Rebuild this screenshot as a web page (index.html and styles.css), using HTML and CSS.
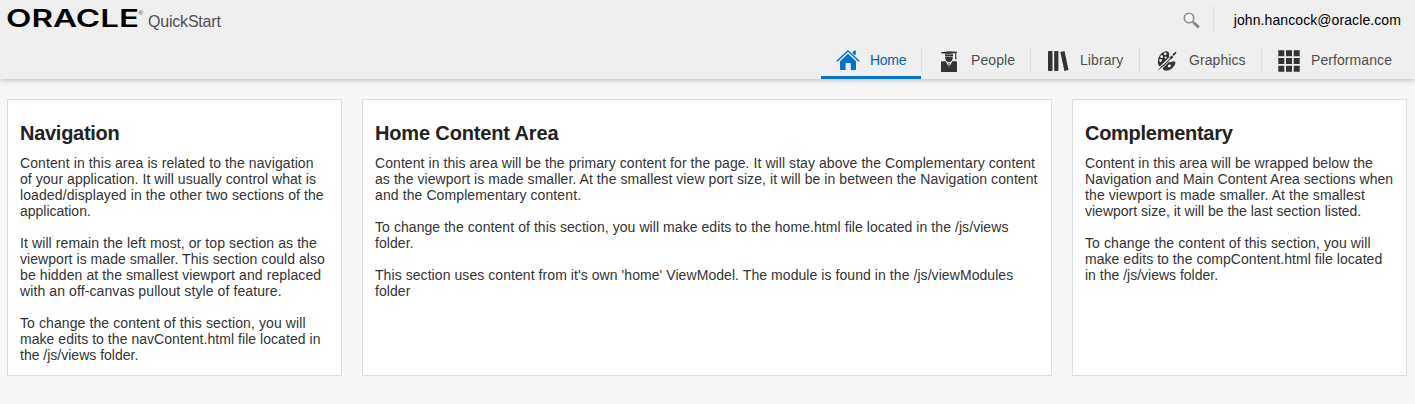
FILE: index.html
```html
<!DOCTYPE html>
<html lang="en">
<head>
<meta charset="utf-8">
<title>Oracle QuickStart</title>
<link rel="stylesheet" href="styles.css">
</head>
<body>
<header class="header">
  <div class="topbar">
    <div class="brand">
      <svg class="logo" width="137" height="20" viewBox="0 0 137 20" role="img" aria-label="Oracle">
        <text class="logo-word" x="-1" y="18" textLength="133" lengthAdjust="spacingAndGlyphs">ORACLE</text>
        <text class="logo-mark" x="131.5" y="5.5">®</text>
      </svg>
      <span class="product">QuickStart</span>
    </div>
    <div class="account">
      <svg class="search" width="18" height="18" viewBox="0 0 18 18">
        <circle cx="6" cy="6" r="4.7" fill="#f5f5f5" stroke="#8c8f91" stroke-width="1.6"/>
        <path d="M9.3 9.3 11 11" stroke="#8c8f91" stroke-width="1.6"/>
        <path d="M10.5 10.5 15.8 15.4" stroke="#85888a" stroke-width="3"/>
      </svg>
      <span class="user">john.hancock@oracle.com</span>
    </div>
  </div>
  <nav class="nav">
    <a class="tab tab-home active">
      <svg class="icon" width="24" height="24" viewBox="0 0 24 24" fill="#0572ce">
        <path d="M12 4.7 20 12.2V20q0 1-1 1h-4.2v-7H9.6v7H5q-1 0-1-1v-7.8z"/>
        <path d="M.8 12.2 12 2 23.2 12.2" fill="none" stroke="#efefef" stroke-width="3"/>
        <path d="M.8 12.2 12 2 23.2 12.2" fill="none" stroke="#0572ce" stroke-width="1.4"/>
        <path d="M16.8 2.2 19.8 1.2V5.4L18.6 6.2 16.8 4.4z"/>
      </svg>Home</a>
    <a class="tab tab-people">
      <svg class="icon" width="24" height="24" viewBox="0 0 24 24" fill="#333">
        <path d="M4 3.2 11.8 2.2 20 2.8v1.3l-8.2.9L4 4.3zM8 5.2l4 .4 4-.4v2.3l-4-.6-4 .6zM18.2 3.7h1.1v5l.4 1.5h-1.9l.4-1.5z"/>
        <path d="M8.1 8q3.9-.9 7.7 0-.2 4.8-3.8 5.3-3.7-.5-3.9-5.3z"/>
        <path d="M4 13.3q0-1 1-1h3.8l3.2 6.5 3.2-6.5H19q1 0 1 1V23H4z"/>
        <path d="M11.2 14.2h1.6l-.4 1 .4 2-.8 1.7-.8-1.7.4-2z"/>
      </svg>People</a>
    <a class="tab tab-library">
      <svg class="icon" width="24" height="24" viewBox="0 0 24 24" fill="#333">
        <rect x="2" y="2" width="4.5" height="20" rx=".7"/>
        <rect x="8.2" y="2" width="4.2" height="20" rx=".7"/>
        <path d="m14.3 3 4.2-1 4 19-4.1 1z"/>
      </svg>Library</a>
    <a class="tab tab-graphics">
      <svg class="icon" width="24" height="24" viewBox="0 0 24 24" fill="#333">
        <path fill-rule="evenodd" d="M3.4 15.8C1.7 10 4.8 3.5 10 2.4c2.5-.5 4.5.7 4.2 3-.2 1.6-.6 2 .3 2.7L4.8 17.5zM4.2 11.5a1.4 1.4 0 1 0 2.8 0 1.4 1.4 0 1 0-2.8 0M5.3 7.7a1.4 1.4 0 1 0 2.8 0 1.4 1.4 0 1 0-2.8 0M8.8 4.8a1.4 1.4 0 1 0 2.8 0 1.4 1.4 0 1 0-2.8 0M9.5 8.6a1.1 1.1 0 1 0 2.2 0 1.1 1.1 0 1 0-2.2 0"/>
        <path fill-rule="evenodd" d="m7.7 19.2 6.2-6.1c2.5.5 3.5-1.2 6.6-.2-.2 4-4.2 8-8.2 8.6-2.5.4-4.5-.4-4.6-2.3M12.8 17.4a1.6 1.2-30 1 0 3.2-1 1.6 1.2-30 1 0-3.2 1"/>
        <path d="M17.4 5.6 20.5 2.8l1 1L18.8 7z"/>
        <path d="M14.5 8.5 16.7 6.5l1.6 1.5-2 2.2z"/>
        <path d="M15.5 8.7 9.2 15.2l-2 1.3L2 22l6.2-4.4 1.8-1.7 6.2-6.3z"/>
      </svg>Graphics</a>
    <a class="tab tab-performance">
      <svg class="icon" width="24" height="24" viewBox="0 0 24 24" fill="#333">
        <path d="M1.3 1.3h6v6h-6zM9 1.3h6v6H9zM16.7 1.3h6v6h-6zM1.3 9h6v6h-6zM9 9h6v6H9zM16.7 9h6v6h-6zM1.3 16.7h6v6h-6zM9 16.7h6v6H9zM16.7 16.7h6v6h-6z"/>
      </svg>Performance</a>
  </nav>
</header>
<main class="columns">
  <section class="panel">
    <h1 class="title-tight">Navigation</h1>
    <p><span class="medium">Content in this area is related to the navigation</span><br><span class="slight">of your application. It will usually control what is</span><br><span class="medium">loaded/displayed in the other two sections of the</span><br>application.</p>
    <p><span class="medium">It will remain the left most, or top section as the</span><br><span class="slight">viewport is made smaller. This section could also</span><br><span class="medium">be hidden at the smallest viewport and replaced</span><br><span class="medium">with an off-canvas pullout style of feature.</span></p>
    <p><span class="medium">To change the content of this section, you will</span><br><span class="slight">make edits to the navContent.html file located in</span><br>the /js/views folder.</p>
  </section>
  <section class="panel">
    <h1>Home Content Area</h1>
    <p class="wide">Content in this area will be the primary content for the page. It will stay above the Complementary content<br>as the viewport is made smaller. At the smallest view port size, it will be in between the Navigation content<br><span class="medium">and the Complementary content.</span></p>
    <p class="wide">To change the content of this section, you will make edits to the home.html file located in the /js/views<br>folder.</p>
    <p class="wide">This section uses content from it's own 'home' ViewModel. The module is found in the /js/viewModules<br>folder</p>
  </section>
  <section class="panel">
    <h1 class="title-tight">Complementary</h1>
    <p><span class="slight">Content in this area will be wrapped below the</span><br><span class="slight">Navigation and Main Content Area sections when</span><br><span class="medium">the viewport is made smaller. At the smallest</span><br>viewport size, it will be the last section listed.</p>
    <p><span class="medium">To change the content of this section, you will</span><br><span class="slight">make edits to the compContent.html file located</span><br>in the /js/views folder.</p>
  </section>
</main>
</body>
</html>
```
FILE: styles.css
```css
* { box-sizing: border-box; }
body {
  margin: 0;
  height: 404px;
  overflow: hidden;
  font: 14px/16px "Liberation Sans", Arial, sans-serif;
  color: #333;
  background: repeating-linear-gradient(45deg, #f5f5f5 0 1.414px, #f9f9f9 1.414px 2.828px);
}
.header {
  height: 79px;
  background: #efefef;
  box-shadow: 0 1px 6px rgba(0, 0, 0, .24);
}
.topbar {
  display: flex;
  justify-content: space-between;
  height: 40px;
}
.brand { display: flex; padding: 9px 0 0 7px; }
.logo { display: block; overflow: visible; }
.logo-word { font: 600 24px Inter, sans-serif; fill: #000; }
.logo-mark { font: 6px "Liberation Sans", sans-serif; fill: #333; }
.product {
  margin: 3px 0 0 4px;
  font-size: 16px;
  line-height: 20px;
  letter-spacing: -.2px;
  color: #4f4f4f;
}
.account { display: flex; padding: 6px 14px 0 0; }
.search { margin: 6px 12px 0 0; }
.user {
  height: 26px;
  padding-left: 20px;
  border-left: 1px solid #d6dfe6;
  line-height: 28px;
  letter-spacing: .09px;
  color: #000;
}
.nav { display: flex; justify-content: flex-end; height: 39px; padding-right: 8px; }
.tab {
  position: relative;
  display: flex;
  gap: 10px;
  height: 39px;
  padding: 7px 0 0 16px;
  line-height: 26px;
  letter-spacing: .08px;
  color: #4f4f4f;
}
.icon { margin-top: 2px; flex: none; }
.tab + .tab::before {
  content: "";
  position: absolute;
  left: 0;
  top: 8px;
  height: 24px;
  border-left: 1px solid #d6dfe6;
}
.tab-home { width: 100px; padding-left: 15px; letter-spacing: -.3px; }
.tab-people { width: 109px; }
.tab-library { width: 109px; }
.tab-graphics { width: 122px; }
.tab-performance { width: 146px; }
.active { color: #0b62b5; border-bottom: 3px solid #0572ce; }
.columns {
  display: grid;
  grid-template-columns: 335px 690px 335px;
  gap: 20px;
  padding: 20px 0 0 7px;
}
.panel {
  height: 277px;
  padding: 21px 0 0 12px;
  background: #fff;
  border: 1px solid #d6dfe6;
  white-space: nowrap;
}
h1 {
  margin: 0 0 10px;
  font-size: 20px;
  line-height: 24px;
  letter-spacing: -.15px;
  color: #222;
}
.title-tight { letter-spacing: -.28px; }
p { margin: 0 0 16px; }
.slight { letter-spacing: .05px; }
.wide { letter-spacing: .067px; }
.medium { letter-spacing: .1px; }
```
